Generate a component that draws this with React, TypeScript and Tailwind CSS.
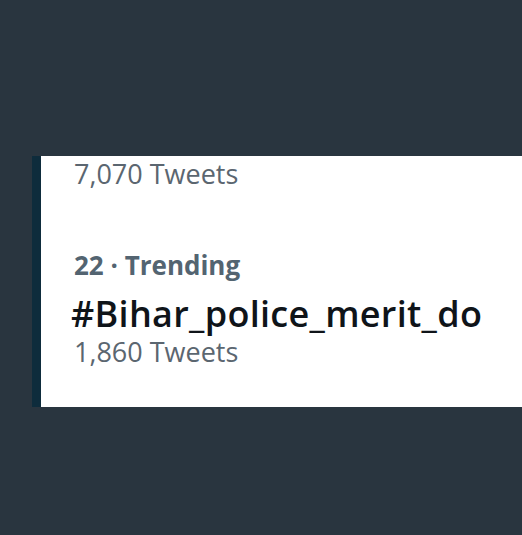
export default function App() {
  return (
    <div className="h-[535px] w-[522px] bg-[#29353f] pt-[156px] pl-[32px]" style={{ fontFamily: '"Open Sans", Arial, sans-serif' }}>
      <div className="h-[251px] border-l-[9px] border-[#0e2c3c] bg-white pl-[33px]">
        <div className="pt-[1px] text-[27px] leading-[34px] text-[#5b6670]">7,070 Tweets</div>
        <div className="mt-[58px] text-[26px] leading-[32px] font-bold text-[#536471]">22 · Trending</div>
        <div className="mt-[13px] text-[36px] leading-[40px] font-semibold tracking-[0.3px] text-[#0f1419] -ml-[3px]">#Bihar_police_merit_do</div>
        <div className="mt-[3px] text-[27px] leading-[30px] text-[#5b6670]">1,860 Tweets</div>
      </div>
    </div>
  );
}
